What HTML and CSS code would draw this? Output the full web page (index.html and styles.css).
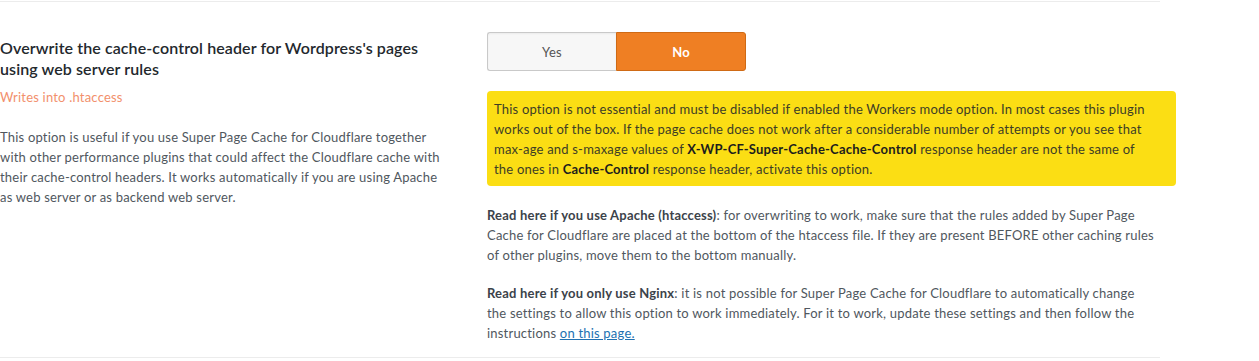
FILE: index.html
```html
<!DOCTYPE html>
<html lang="en">
<head>
    <meta charset="UTF-8">
    <meta name="viewport" content="width=device-width, initial-scale=1.0">
    <title>Cache-Control Settings</title>
    <link rel="stylesheet" href="styles.css">
</head>
<body>
    <div class="setting-row">
        <div class="setting-label">
            <h3 class="setting-title">Overwrite the cache-control header for Wordpress's pages using web server rules</h3>
            <div class="setting-note">Writes into .htaccess</div>
            <p class="setting-desc">This option is useful if you use Super Page Cache for Cloudflare together with other performance plugins that could affect the Cloudflare cache with their cache-control headers. It works automatically if you are using Apache as web server or as backend web server.</p>
        </div>
        <div class="setting-field">
            <div class="switch">
                <label class="switch-opt">Yes</label>
                <label class="switch-opt active">No</label>
            </div>
            <div class="warning">This option is not essential and must be disabled if enabled the Workers mode option. In most cases this plugin works out of the box. If the page cache does not work after a considerable number of attempts or you see that max-age and s-maxage values of <strong>X-WP-CF-Super-Cache-Cache-Control</strong> response header are not the same of the ones in <strong>Cache-Control</strong> response header, activate this option.</div>
            <p class="info"><strong>Read here if you use Apache (htaccess)</strong>: for overwriting to work, make sure that the rules added by Super Page Cache for Cloudflare are placed at the bottom of the htaccess file. If they are present BEFORE other caching rules of other plugins, move them to the bottom manually.</p>
            <p class="info"><strong>Read here if you only use Nginx</strong>: it is not possible for Super Page Cache for Cloudflare to automatically change the settings to allow this option to work immediately. For it to work, update these settings and then follow the instructions <a href="#">on this page.</a></p>
        </div>
    </div>
</body>
</html>
```

FILE: styles.css
```css
body {
    margin: 0;
    padding-top: 1px;
    background-color: #fff;
    font-family: Lato, 'Open Sans', sans-serif;
    font-size: 13px;
    line-height: 20px;
    letter-spacing: 0.2px;
    color: #50575e;
}
.setting-row {
    width: 1160px;
    display: grid;
    grid-template-columns: 487px 689px;
    border-top: 1px solid #ececec;
    border-bottom: 1px solid #ececec;
    padding-bottom: 14px;
}
.setting-label {
    padding-top: 35px;
    padding-right: 40px;
}
.setting-title {
    margin: 0;
    max-width: 430px;
    font-size: 16px;
    line-height: 21px;
    font-weight: 600;
    letter-spacing: 0.1px;
    color: #23282d;
}
.setting-note {
    margin-top: 8px;
    color: #f2906c;
}
.setting-desc {
    margin: 20px 0 0;
}
.setting-field {
    padding-top: 30px;
}
.switch {
    display: flex;
    width: 259px;
    height: 39px;
}
.switch-opt {
    flex: 1;
    display: flex;
    align-items: center;
    justify-content: center;
    background-color: #f7f7f7;
    border: 1px solid #c9c9c9;
    border-right: none;
    border-radius: 3px 0 0 3px;
    color: #555;
    box-shadow: inset 0 1px 2px rgba(0,0,0,.05);
}
.switch-opt.active {
    background-color: #ef7f23;
    border: 1px solid #cf6a15;
    border-radius: 0 3px 3px 0;
    color: #fff;
    font-weight: 700;
    box-shadow: none;
}
.warning {
    margin-top: 20px;
    background-color: #fbde14;
    border-radius: 4px;
    padding: 8px 20px 7px 7px;
    color: #3d3d26;
}
.warning strong {
    color: #1d1d1d;
}
.info {
    margin: 19px 0 0;
    padding-right: 20px;
}
.info + .info {
    margin-top: 18px;
}
.info strong {
    color: #3c434a;
}
.info a {
    color: #2271b1;
}
```
